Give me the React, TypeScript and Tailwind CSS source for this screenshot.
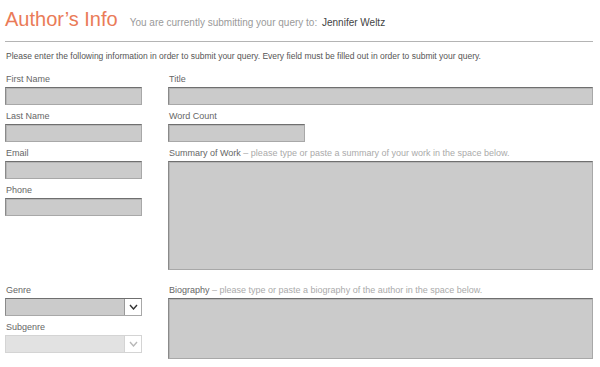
import { ReactNode } from 'react'

const field =
  'h-[18px] border border-[#a8a8a8] border-t-[#6f6f6f] border-l-[#8a8a8a] bg-[#cbcbcb] shadow-[inset_1px_1px_0_#b5b5b5]'

function Label({ children }: { children: ReactNode }) {
  return <div className="h-[13px] pl-px text-[9px] leading-[11px] text-[#666]">{children}</div>
}

function Input({ className = '' }: { className?: string }) {
  return <div className={`${field} ${className}`} />
}

function Chevron({ color }: { color: string }) {
  return (
    <svg width="9" height="6" viewBox="0 0 9 6" fill="none">
      <path d="M1 1l3.5 4L8 1" stroke={color} strokeWidth="1.4" />
    </svg>
  )
}

function Select({ disabled }: { disabled?: boolean }) {
  return (
    <div
      className={
        disabled
          ? 'flex h-[18px] border border-[#d4d4d4] bg-[#e2e2e2]'
          : 'flex h-[18px] border border-[#a8a8a8] border-t-[#6f6f6f] border-l-[#8a8a8a] bg-[#cbcbcb]'
      }
    >
      <div className="flex-1" />
      <div
        className={
          disabled
            ? 'flex w-[17px] items-center justify-center border-l border-[#d4d4d4] bg-white'
            : 'flex w-[17px] items-center justify-center border-l border-[#999] bg-white'
        }
      >
        <Chevron color={disabled ? '#b8b8b8' : '#333'} />
      </div>
    </div>
  )
}

export default function App() {
  return (
    <div className="h-[367px] w-[600px] overflow-hidden bg-white px-[5px] pt-[6px] font-['Liberation_Sans',Arial,sans-serif]">
      {/* Header */}
      <div className="flex items-baseline gap-[12px] pb-[9px]">
        <h1 className="text-[20px] leading-[26px] text-[#ea7b58]">Author’s Info</h1>
        <div className="text-[10px] text-[#9a9a9a]">
          You are currently submitting your query to:{' '}
          <span className="ml-[2px] text-[#444]">Jennifer Weltz</span>
        </div>
      </div>
      <div className="h-px w-[588px] bg-[#b4b4b4]" />
      <p className="mt-[9px] pl-px text-[8.5px] leading-[10px] text-[#555]">
        Please enter the following information in order to submit your query. Every field must be filled out in order to submit your query.
      </p>

      {/* Top section */}
      <div className="mt-[13px] flex gap-[26px]">
        <div className="flex w-[137px] flex-col gap-[6px]">
          <div>
            <Label>First Name</Label>
            <Input />
          </div>
          <div>
            <Label>Last Name</Label>
            <Input />
          </div>
          <div>
            <Label>Email</Label>
            <Input />
          </div>
          <div>
            <Label>Phone</Label>
            <Input />
          </div>
        </div>

        <div className="flex w-[425px] flex-col gap-[6px]">
          <div>
            <Label>Title</Label>
            <Input />
          </div>
          <div>
            <Label>Word Count</Label>
            <Input className="w-[137px]" />
          </div>
          <div>
            <Label>
              Summary of Work <span className="text-[#aaa]">– please type or paste a summary of your work in the space below.</span>
            </Label>
            <Input className="h-[109px]" />
          </div>
        </div>
      </div>

      {/* Bottom section */}
      <div className="mt-[15px] flex gap-[26px]">
        <div className="flex w-[137px] flex-col gap-[6px]">
          <div>
            <Label>Genre</Label>
            <Select />
          </div>
          <div>
            <Label>Subgenre</Label>
            <Select disabled />
          </div>
        </div>
        <div className="w-[425px]">
          <Label>
            Biography <span className="text-[#aaa]">– please type or paste a biography of the author in the space below.</span>
          </Label>
          <Input className="h-[61px]" />
        </div>
      </div>
    </div>
  )
}
